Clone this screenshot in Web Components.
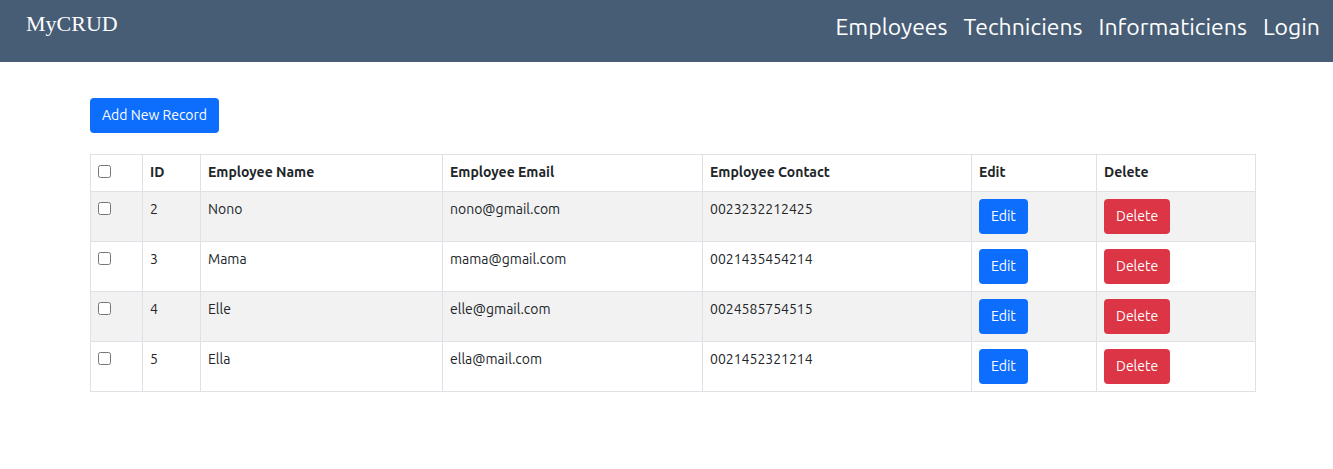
<!DOCTYPE html>
<html lang="en">
<head>
<meta charset="utf-8">
<meta name="viewport" content="width=device-width, initial-scale=1">
<title>MyCRUD</title>
<style>
  body {
    margin: 0;
    background: #fff;
    color: #212529;
    font: 14px/22px Ubuntu, "Noto Sans", "Open Sans", sans-serif;
  }
</style>
</head>
<body>
<crud-header>
  <nav-link href="#employees">Employees</nav-link>
  <nav-link href="#techniciens">Techniciens</nav-link>
  <nav-link href="#informaticiens">Informaticiens</nav-link>
  <nav-link href="#login">Login</nav-link>
</crud-header>
<crud-page>
  <action-button slot="toolbar">Add New Record</action-button>
  <employee-table></employee-table>
</crud-page>

<script>
  function attach(host, html) {
    const root = host.attachShadow({ mode: 'open' });
    root.innerHTML = html;
    return root;
  }

  customElements.define('crud-header', class extends HTMLElement {
    constructor() {
      super();
      attach(this, `
        <style>
          :host { display: block; background: #475d75; color: #fff; }
          header { display: flex; justify-content: space-between; align-items: flex-start; padding: 8px 13px 19px 26px; }
          .brand { color: inherit; text-decoration: none; font: 22px/32px "Liberation Serif", "Times New Roman", serif; }
          nav { display: flex; flex-wrap: wrap; gap: 16px; padding-top: 3px; }
        </style>
        <header>
          <a class="brand" href="#home">MyCRUD</a>
          <nav aria-label="Main"><slot></slot></nav>
        </header>`);
    }
  });

  customElements.define('nav-link', class extends HTMLElement {
    constructor() {
      super();
      const root = attach(this, `
        <style>
          :host { display: block; }
          a { display: block; color: inherit; text-decoration: none; font-size: 23px; line-height: 32px; }
          a:hover { text-decoration: underline; }
        </style>
        <a><slot></slot></a>`);
      root.querySelector('a').href = this.getAttribute('href');
    }
  });

  customElements.define('crud-page', class extends HTMLElement {
    constructor() {
      super();
      attach(this, `
        <style>
          :host { display: block; padding: 36px 77px 36px 90px; }
          main { display: flex; flex-direction: column; gap: 21px; }
          .toolbar { display: flex; }
        </style>
        <main>
          <div class="toolbar"><slot name="toolbar"></slot></div>
          <slot></slot>
        </main>`);
    }
  });

  customElements.define('action-button', class extends HTMLElement {
    constructor() {
      super();
      attach(this, `
        <style>
          :host { display: block; --fill: #0d6efd; }
          :host([variant="danger"]) { --fill: #dc3545; }
          button {
            display: block; margin: 0; padding: 6px 12px 7px; border: 0; border-radius: 4px;
            background: var(--fill); color: #fff; font: inherit; line-height: 22px; cursor: pointer;
            white-space: nowrap;
          }
          button:hover { filter: brightness(.9); }
        </style>
        <button type="button"><slot></slot></button>`);
    }
  });

  const employees = [
    { id: 2, name: 'Nono', email: 'nono@gmail.com', contact: '0023232212425' },
    { id: 3, name: 'Mama', email: 'mama@gmail.com', contact: '0021435454214' },
    { id: 4, name: 'Elle', email: 'elle@gmail.com', contact: '0024585754515' },
    { id: 5, name: 'Ella', email: 'ella@mail.com', contact: '0021452321214' }
  ];

  customElements.define('employee-table', class extends HTMLElement {
    constructor() {
      super();
      const rows = employees.map(e => `
        <tr>
          <td><input type="checkbox" aria-label="Select ${e.name}"></td>
          <td>${e.id}</td>
          <td>${e.name}</td>
          <td>${e.email}</td>
          <td>${e.contact}</td>
          <td><action-button>Edit</action-button></td>
          <td><action-button variant="danger">Delete</action-button></td>
        </tr>`).join('');
      const root = attach(this, `
        <style>
          :host { display: block; }
          table { width: 100%; table-layout: fixed; border-collapse: collapse; }
          th, td { padding: 7px; border: 1px solid #dee2e6; text-align: left; vertical-align: top; font-size: 14px; line-height: 20px; }
          th { padding-bottom: 9px; font-weight: 700; }
          tbody tr:nth-child(odd) { background: #f2f2f2; }
          input { display: block; width: 13px; height: 13px; margin: 3px 0; box-sizing: border-box; }
          .check { width: 52px; }
          .id { width: 58px; }
          .name { width: 242px; }
          .email { width: 260px; }
          .contact { width: 269px; }
          .edit { width: 125px; }
          .delete { width: 159px; }
        </style>
        <table>
          <colgroup>
            <col class="check"><col class="id"><col class="name"><col class="email">
            <col class="contact"><col class="edit"><col class="delete">
          </colgroup>
          <thead>
            <tr>
              <th><input type="checkbox" aria-label="Select all"></th>
              <th>ID</th><th>Employee Name</th><th>Employee Email</th>
              <th>Employee Contact</th><th>Edit</th><th>Delete</th>
            </tr>
          </thead>
          <tbody>${rows}</tbody>
        </table>`);
      const [all, ...each] = root.querySelectorAll('input');
      all.addEventListener('change', () => each.forEach(box => { box.checked = all.checked; }));
    }
  });
</script>
</body>
</html>
